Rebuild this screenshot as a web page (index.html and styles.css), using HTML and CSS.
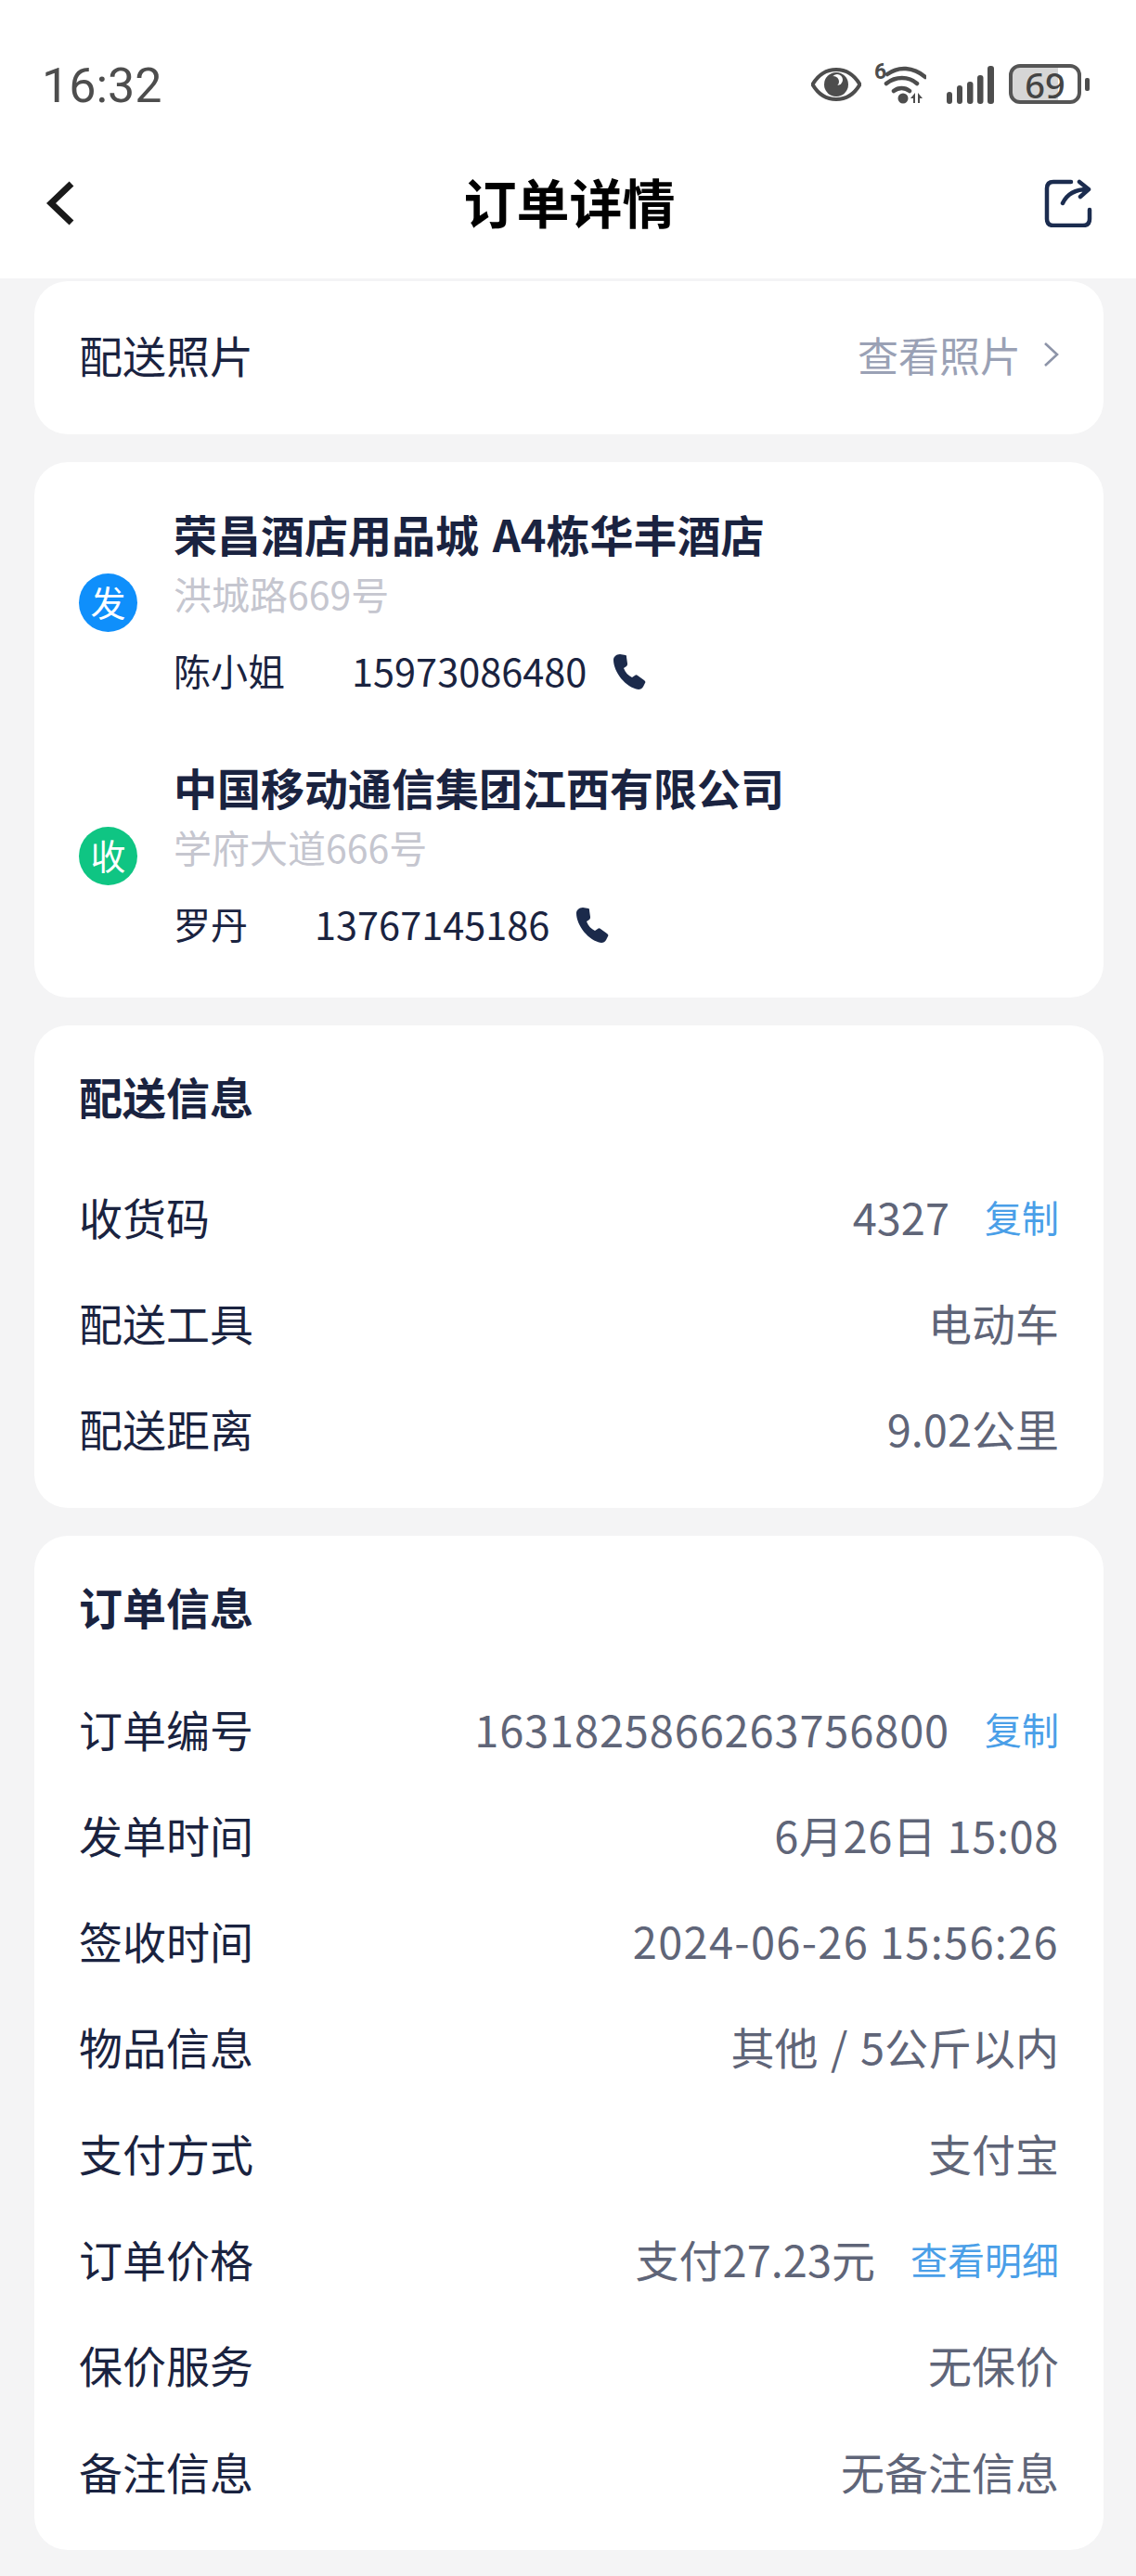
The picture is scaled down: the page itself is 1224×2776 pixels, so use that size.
FILE: index.html
```html
<!DOCTYPE html>
<html lang="zh-CN">
<head>
<meta charset="utf-8">
<title>订单详情</title>
<link rel="stylesheet" href="styles.css">
</head>
<body>
<div class="page">
  <header class="top">
    <div class="status">
      <span class="time">16:32</span>
      <div class="status-icons">
        <svg class="ic-eye" width="54" height="36" viewBox="0 0 54 36"><path d="M1.5 18C8 7 17 2 27 2s19 5 25.5 16C46 29 37 34 27 34S8 29 1.5 18z" fill="none" stroke="#4d4d4d" stroke-width="4"/><circle cx="27" cy="18" r="13" fill="#4d4d4d"/><circle cx="28" cy="13" r="6" fill="#fff"/><circle cx="24" cy="15" r="6" fill="#4d4d4d"/></svg>
        <div class="wifi">
          <span class="wifi-six">6</span>
          <svg class="ic-wifi" width="56" height="43" viewBox="0 0 56 43"><path d="M14 11C26 2 42 3 55 14M13 21C23 13 37 13 46 21M21 29C26 25 33 25 38 29" fill="none" stroke="#4d4d4d" stroke-width="4.5" stroke-linecap="round"/><circle cx="31" cy="37" r="5.5" fill="#4d4d4d"/><path d="M39 37l5-6v11h-2v-5zM47 31l5 6h-3v5h-2z" fill="#4d4d4d"/></svg>
        </div>
        <svg class="ic-signal" width="51" height="41" viewBox="0 0 51 41"><rect x="0" y="28" width="6" height="13" rx="3" fill="#4d4d4d"/><rect x="11" y="21" width="6" height="20" rx="3" fill="#4d4d4d"/><rect x="22" y="17" width="6.5" height="24" rx="3" fill="#4d4d4d"/><rect x="33" y="10" width="6.5" height="31" rx="3" fill="#4d4d4d"/><rect x="44" y="0" width="7" height="41" rx="3" fill="#4d4d4d"/></svg>
        <div class="battery"><span class="battery-num">69</span></div>
      </div>
    </div>
    <nav class="nav">
      <svg class="nav-back" width="30" height="48" viewBox="0 0 30 48"><path d="M27 3L5 24l22 21" fill="none" stroke="#1a1a1a" stroke-width="7"/></svg>
      <h1 class="nav-title">订单详情</h1>
      <svg class="nav-share" width="52" height="52" viewBox="0 0 52 52"><path d="M29 3H10Q3 3 3 10V43Q3 50 10 50H42Q49 50 49 43V33" fill="none" stroke="#1b2c4f" stroke-width="4.5" stroke-linecap="round"/><path d="M20 26Q27 11 47 11M38 3l10 8-9 8" fill="none" stroke="#1b2c4f" stroke-width="4.5" stroke-linecap="round" stroke-linejoin="round"/></svg>
    </nav>
  </header>

  <main class="cards">
    <section class="card card-photo">
      <span class="label">配送照片</span>
      <span class="photo-link">查看照片
        <svg class="chev" width="17" height="28" viewBox="0 0 17 28"><path d="M2 2l13 12L2 26" fill="none" stroke="#8d94a8" stroke-width="2.6"/></svg>
      </span>
    </section>

    <section class="card card-route">
      <div class="party">
        <span class="badge badge-send">发</span>
        <div class="party-info">
          <div class="party-name">荣昌酒店用品城 A4栋华丰酒店</div>
          <div class="party-addr">洪城路669号</div>
          <div class="party-contact"><span class="contact-name">陈小姐</span><span class="contact-phone">15973086480</span>
            <svg class="phone" width="40" height="40" viewBox="0 0 40 40"><path d="M10 1l6 1c1 0 1 1 1 2l1 7c0 1 0 2-1 3l-3 2c2 5 5 8 9 10l3-2c1-1 2-1 3 0l7 5c1 1 2 2 1 3l-2 4c-1 2-3 3-5 3C16 37 3 20 3 7c0-3 3-6 7-6z" fill="#1b2a4b"/></svg>
          </div>
        </div>
      </div>
      <div class="party">
        <span class="badge badge-recv">收</span>
        <div class="party-info">
          <div class="party-name">中国移动通信集团江西有限公司</div>
          <div class="party-addr">学府大道666号</div>
          <div class="party-contact"><span class="contact-name">罗丹</span><span class="contact-phone">13767145186</span>
            <svg class="phone" width="40" height="40" viewBox="0 0 40 40"><path d="M10 1l6 1c1 0 1 1 1 2l1 7c0 1 0 2-1 3l-3 2c2 5 5 8 9 10l3-2c1-1 2-1 3 0l7 5c1 1 2 2 1 3l-2 4c-1 2-3 3-5 3C16 37 3 20 3 7c0-3 3-6 7-6z" fill="#1b2a4b"/></svg>
          </div>
        </div>
      </div>
    </section>

    <section class="card card-info card-delivery">
      <h2 class="card-title">配送信息</h2>
      <div class="row"><span class="label">收货码</span><span class="value">4327<a class="link">复制</a></span></div>
      <div class="row"><span class="label">配送工具</span><span class="value">电动车</span></div>
      <div class="row"><span class="label">配送距离</span><span class="value">9.02公里</span></div>
    </section>

    <section class="card card-info">
      <h2 class="card-title">订单信息</h2>
      <div class="row"><span class="label">订单编号</span><span class="value"><span class="digits-wide">1631825866263756800</span><a class="link">复制</a></span></div>
      <div class="row"><span class="label">发单时间</span><span class="value digits-mid">6月26日 15:08</span></div>
      <div class="row"><span class="label">签收时间</span><span class="value digits-date">2024-06-26 15:56:26</span></div>
      <div class="row"><span class="label">物品信息</span><span class="value value-goods">其他 / 5公斤以内</span></div>
      <div class="row"><span class="label">支付方式</span><span class="value">支付宝</span></div>
      <div class="row"><span class="label">订单价格</span><span class="value">支付27.23元<a class="link">查看明细</a></span></div>
      <div class="row"><span class="label">保价服务</span><span class="value">无保价</span></div>
      <div class="row"><span class="label">备注信息</span><span class="value">无备注信息</span></div>
    </section>
  </main>
</div>
</body>
</html>
```
FILE: styles.css
```css
* { box-sizing: border-box; }
html, body { margin: 0; padding: 0; }
body {
  width: 1224px;
  height: 2776px;
  background: #f4f4f5;
  font-family: "Noto Sans CJK SC", "Noto Sans", sans-serif;
  color: #1a2340;
  overflow: hidden;
}
.top { background: #fff; height: 300px; display: flex; flex-direction: column; }
.status {
  height: 162px;
  padding: 69px 59px 0 45px;
  display: flex;
  justify-content: space-between;
  align-items: flex-start;
}
.time {
  font-family: Roboto, sans-serif;
  font-size: 52px;
  line-height: 48px;
  color: #4d4d4d;
}
.status-icons { display: flex; align-items: flex-start; }
.ic-eye { margin-top: 4px; }
.wifi { position: relative; margin-left: 14px; }
.ic-wifi { display: block; }
.wifi-six {
  position: absolute;
  left: 0;
  top: -3px;
  font-family: Roboto, sans-serif;
  font-size: 23px;
  line-height: 23px;
  font-weight: 700;
  color: #4d4d4d;
}
.ic-signal { margin-left: 22px; margin-top: 2px; }
.battery {
  position: relative;
  margin-left: 16px;
  width: 78px;
  height: 43px;
  border: 4px solid #555;
  border-radius: 12px;
  background: linear-gradient(90deg, #d6d6d6 0 70%, #fff 70%);
  display: flex;
  align-items: center;
  justify-content: center;
}
.battery::after {
  content: "";
  position: absolute;
  left: 78px;
  top: 11px;
  width: 5px;
  height: 14px;
  border-radius: 2px;
  background: #4d4d4d;
}
.battery-num { font-family: "Noto Sans", sans-serif; font-size: 38px; font-weight: 500; line-height: 36px; color: #444; }

.nav {
  height: 114px;
  padding: 0 47px 0 50px;
  display: grid;
  grid-template-columns: 1fr auto 1fr;
  align-items: center;
}
.nav-back { justify-self: start; }
.nav-share { justify-self: end; }
.nav-title { margin: 0 0 6px; font-size: 57px; line-height: 70px; font-weight: 700; color: #000; }

.cards {
  display: flex;
  flex-direction: column;
  gap: 30px;
  padding: 3px 35px 0 37px;
}
.card { background: #fff; border-radius: 36px; }
.card-photo {
  height: 165px;
  padding: 0 48px 7px 48px;
  display: flex;
  justify-content: space-between;
  align-items: center;
}
.label { font-size: 47px; line-height: 60px; color: #1a2340; }
.photo-link { display: flex; align-items: center; gap: 24px; font-size: 44px; line-height: 60px; color: #9aa1b5; }

.card-route { padding: 46px 48px 55px; display: flex; flex-direction: column; gap: 70px; }
.party { display: flex; align-items: center; gap: 39px; }
.badge {
  width: 63px;
  height: 63px;
  margin-top: 7px;
  border-radius: 50%;
  color: #fff;
  font-size: 38px;
  line-height: 60px;
  text-align: center;
  flex: none;
}
.badge-send { background: #0f8ffb; }
.badge-recv { background: #0fc583; }
.party-name { font-size: 47px; line-height: 62px; font-weight: 700; color: #1a2340; white-space: nowrap; word-spacing: 4px; }
.party-addr { margin-top: 8px; font-size: 41px; line-height: 50px; color: #c5c6cf; }
.party-contact { margin-top: 33px; display: flex; align-items: center; font-size: 40px; line-height: 50px; color: #1a2340; }
.contact-phone { margin-left: 72px; font-size: 41.5px; }
.phone { margin-left: 26px; margin-top: 4px; }

.card-info { padding: 0 48px 25px; }
.card-title { margin: 0; height: 154px; padding-top: 46px; font-size: 47px; line-height: 60px; font-weight: 700; color: #1a2340; }
.card-delivery .card-title { height: 152px; }
.row { height: 114.3px; padding-bottom: 7px; display: flex; justify-content: space-between; align-items: center; }
.value { display: flex; align-items: center; font-size: 47px; line-height: 60px; color: #5f6578; white-space: pre; }
.value-goods { word-spacing: 3px; }
.digits-wide { letter-spacing: 0.85px; }
.digits-mid { letter-spacing: 0.6px; }
.digits-date { letter-spacing: 1.3px; }
.link { margin-left: 38px; font-size: 40px; color: #4a9fe8; letter-spacing: 0; }
```
